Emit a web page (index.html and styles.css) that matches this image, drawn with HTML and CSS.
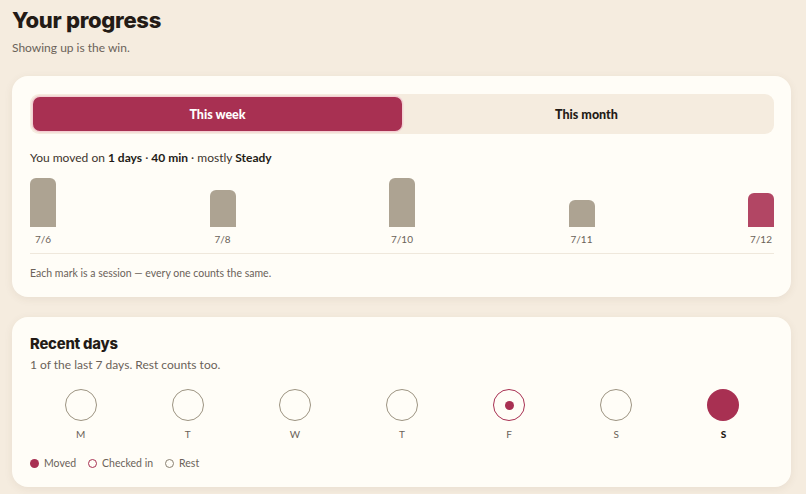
FILE: index.html
```html
<!DOCTYPE html>
<html lang="en">
<head>
<meta charset="utf-8">
<title>Your progress</title>
<link rel="stylesheet" href="styles.css">
</head>
<body>
<main class="page">
  <h1 class="title">Your progress</h1>
  <p class="subtitle">Showing up is the win.</p>

  <section class="card">
    <div class="tabs">
      <button class="tab tab-active">This week</button>
      <button class="tab">This month</button>
    </div>
    <p class="summary">You moved on <b>1 days</b> · <b>40 min</b> · mostly <b>Steady</b></p>
    <div class="chart">
      <div class="col"><div class="bar-area"><div class="bar" style="height:49px"></div></div><span class="bar-label">7/6</span></div>
      <div class="col"><div class="bar-area"><div class="bar" style="height:37px"></div></div><span class="bar-label">7/8</span></div>
      <div class="col"><div class="bar-area"><div class="bar" style="height:49px"></div></div><span class="bar-label">7/10</span></div>
      <div class="col"><div class="bar-area"><div class="bar" style="height:27px"></div></div><span class="bar-label">7/11</span></div>
      <div class="col"><div class="bar-area"><div class="bar bar-today" style="height:34px"></div></div><span class="bar-label">7/12</span></div>
    </div>
    <hr class="divider">
    <p class="note">Each mark is a session — every one counts the same.</p>
  </section>

  <section class="card card-days">
    <h2 class="card-title">Recent days</h2>
    <p class="card-sub">1 of the last 7 days. Rest counts too.</p>
    <div class="days">
      <div class="day"><span class="dot dot-rest"></span><span class="day-label">M</span></div>
      <div class="day"><span class="dot dot-rest"></span><span class="day-label">T</span></div>
      <div class="day"><span class="dot dot-rest"></span><span class="day-label">W</span></div>
      <div class="day"><span class="dot dot-rest"></span><span class="day-label">T</span></div>
      <div class="day"><span class="dot dot-checked"><span class="inner"></span></span><span class="day-label">F</span></div>
      <div class="day"><span class="dot dot-rest"></span><span class="day-label">S</span></div>
      <div class="day"><span class="dot dot-moved"></span><span class="day-label day-today">S</span></div>
    </div>
    <div class="legend">
      <span class="legend-item"><span class="lg lg-moved"></span>Moved</span>
      <span class="legend-item"><span class="lg lg-checked"></span>Checked in</span>
      <span class="legend-item"><span class="lg lg-rest"></span>Rest</span>
    </div>
  </section>
</main>
</body>
</html>
```

FILE: styles.css
```css
* { box-sizing: border-box; }
html, body { margin: 0; padding: 0; }
body {
  background: #f5ecdf;
  font-family: Lato, "Noto Sans", "Liberation Sans", sans-serif;
  color: #2b231d;
}
.page {
  padding: 6px 15px 20px 12px;
}
.title {
  margin: 0;
  font-family: Inter, "Noto Sans", sans-serif;
  font-size: 22px;
  line-height: 28px;
  font-weight: 800;
  letter-spacing: -0.3px;
  color: #231b16;
}
.subtitle {
  margin: 5px 0 0;
  font-size: 12px;
  line-height: 18px;
  color: #6b6259;
}
.card {
  margin-top: 19px;
  background: #fffdf7;
  border-radius: 16px;
  padding: 18px 17px 16px 18px;
  box-shadow: 0 2px 8px rgba(90, 70, 40, 0.08);
}
.card-days { margin-top: 20px; }
.tabs {
  display: flex;
  background: #f5ecdf;
  border-radius: 9px;
  padding: 3px;
  height: 40px;
}
.tab {
  flex: 1;
  border: 0;
  background: transparent;
  border-radius: 7px;
  font-family: Lato, "Noto Sans", sans-serif;
  font-size: 12.5px;
  font-weight: 900;
  color: #231b16;
  cursor: pointer;
}
.tab-active {
  background: #a83052;
  color: #fff;
  box-shadow: 0 0 0 1.5px #f3cfd3;
}
.summary {
  margin: 15px 0 0;
  font-size: 12px;
  line-height: 18px;
  color: #3d342d;
}
.summary b { font-weight: 700; color: #231b16; }
.chart {
  margin-top: 10px;
  display: flex;
  justify-content: space-between;
}
.col {
  display: flex;
  flex-direction: column;
  align-items: center;
  width: 26px;
}
.bar-area {
  height: 50px;
  width: 26px;
  display: flex;
  align-items: flex-end;
}
.bar {
  width: 26px;
  background: #ada392;
  border-radius: 6px 6px 0 0;
}
.bar-today { background: #b24664; }
.bar-label {
  margin-top: 5px;
  font-size: 10px;
  line-height: 14px;
  color: #6b6259;
  white-space: nowrap;
}
.divider {
  margin: 7px 0 0;
  border: 0;
  border-top: 1px solid #efe8dc;
}
.note {
  margin: 11px 0 0;
  font-size: 10.5px;
  line-height: 16px;
  color: #6b6259;
}
.card-title {
  margin: 0;
  font-family: Inter, "Noto Sans", sans-serif;
  font-size: 14.8px;
  line-height: 18px;
  font-weight: 800;
  letter-spacing: -0.2px;
  color: #231b16;
}
.card-sub {
  margin: 3px 0 0;
  font-size: 12px;
  line-height: 18px;
  color: #6b6259;
}
.days {
  margin-top: 15px;
  display: grid;
  grid-template-columns: repeat(7, 1fr);
  gap: 6px;
}
.day {
  display: flex;
  flex-direction: column;
  align-items: center;
}
.dot {
  width: 32px;
  height: 32px;
  border-radius: 50%;
  display: flex;
  align-items: center;
  justify-content: center;
}
.dot-rest { border: 1.5px solid #9d9482; }
.dot-checked { border: 1.5px solid #a83052; }
.dot-checked .inner {
  width: 9px;
  height: 9px;
  border-radius: 50%;
  background: #a83052;
}
.dot-moved { background: #a83052; }
.day-label {
  margin-top: 6px;
  font-size: 10px;
  line-height: 14px;
  color: #6b6259;
}
.day-today { font-weight: 900; color: #1c1612; }
.legend {
  margin-top: 14px;
  display: flex;
  gap: 12px;
  font-size: 10.5px;
  line-height: 16px;
  color: #6b6259;
}
.legend-item {
  display: flex;
  align-items: center;
  gap: 5px;
}
.lg {
  width: 9px;
  height: 9px;
  border-radius: 50%;
}
.lg-moved { background: #a83052; }
.lg-checked { border: 1.5px solid #a83052; }
.lg-rest { border: 1.5px solid #8a8172; }
```
